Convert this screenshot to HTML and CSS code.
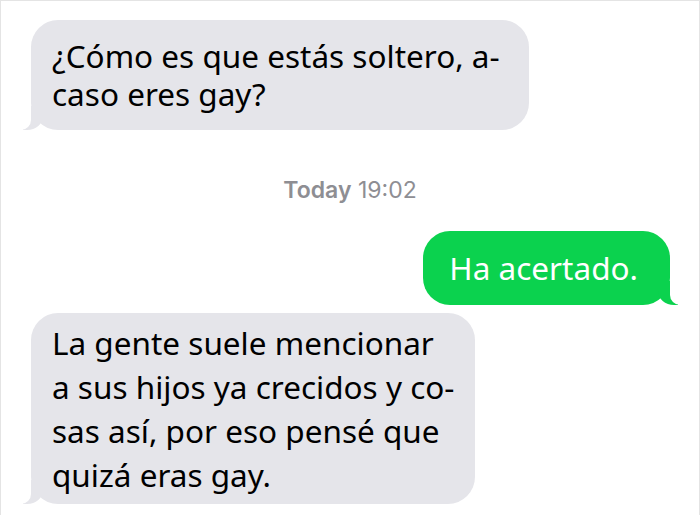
FILE: index.html
```html
<!DOCTYPE html>
<html lang="es">
<head>
    <meta charset="UTF-8">
    <meta name="viewport" content="width=device-width, initial-scale=1.0">
    <title>Mensajes</title>
    <link rel="stylesheet" href="styles.css">
</head>
<body>
    <div class="screen">
        <div class="msg in first">¿Cómo es que estás soltero, a-<br>caso eres gay?</div>

        <div class="stamp"><b>Today</b> 19:02</div>

        <div class="msg out">Ha acertado.</div>

        <div class="msg in last">La gente suele mencionar<br>a sus hijos ya crecidos y co-<br>sas así, por eso pensé que<br>quizá eras gay.</div>
    </div>
</body>
</html>
```

FILE: styles.css
```css
html, body {
    margin: 0;
    background: #fff;
}
.screen {
    box-sizing: border-box;
    width: 700px;
    height: 515px;
    overflow: hidden;
    border: 1px solid #e4e4e4;
    border-bottom: none;
    display: flex;
    flex-direction: column;
    padding: 19px 19px 0 30px;
    font-family: "Noto Sans", "Open Sans", sans-serif;
}
.msg {
    position: relative;
    font-size: 31.5px;
    line-height: 38px;
    border-radius: 27px;
    padding: 17px 29px 17px 21px;
}
.msg.in {
    align-self: flex-start;
    background: #e5e5ea;
    color: #000;
}
.msg.out {
    align-self: flex-end;
    background: #0bd24e;
    color: #fff;
    padding: 18px 32px 18px 26px;
    margin-right: 10px;
}
.msg.last {
    margin-top: 8px;
    line-height: 44px;
    padding: 8px 21px 7px 21px;
}

/* tails */
.msg::before,
.msg::after {
    content: "";
    position: absolute;
    bottom: 0;
    height: 24px;
}
.msg.in::before {
    left: -8px;
    width: 20px;
    background: #e5e5ea;
    border-bottom-right-radius: 16px 14px;
}
.msg.in::after {
    left: -26px;
    width: 26px;
    background: #fff;
    border-bottom-right-radius: 10px;
}
.msg.out::before {
    right: -8px;
    width: 20px;
    background: #0bd24e;
    border-bottom-left-radius: 16px 14px;
}
.msg.out::after {
    right: -26px;
    width: 26px;
    background: #fff;
    border-bottom-left-radius: 10px;
}

.stamp {
    align-self: center;
    margin: 46px 11px 27px 0;
    font-family: Inter, "Liberation Sans", sans-serif;
    font-size: 23px;
    line-height: 28px;
    color: #8e8e93;
}
.stamp b {
    font-weight: 600;
}
```
